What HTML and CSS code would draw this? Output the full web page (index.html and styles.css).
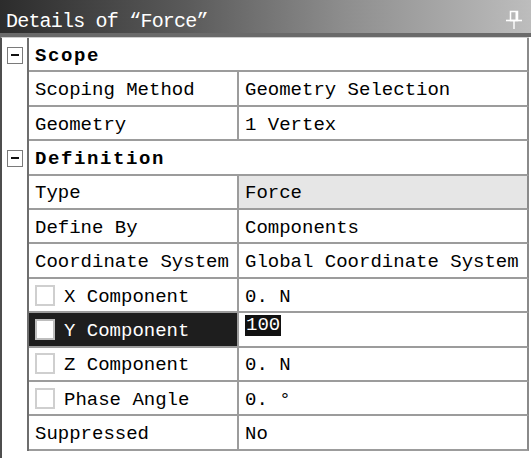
FILE: index.html
```html
<!DOCTYPE html>
<html>
<head>
<meta charset="utf-8">
<link rel="stylesheet" href="styles.css">
</head>
<body>
<div class="panel">
  <div class="titlebar">
    <span class="title">Details of “Force”</span>
    <svg class="pin" width="18" height="20" viewBox="0 0 18 20">
      <path d="M5.5 1.5 H12.5 V10.5 H5.5 Z" fill="none" stroke="#fff" stroke-width="1.5"/>
      <path d="M11.5 1.5 V10.5" stroke="#fff" stroke-width="2"/>
      <path d="M1 10.5 H17" stroke="#fff" stroke-width="1.6"/>
      <path d="M9 11 V19" stroke="#fff" stroke-width="1.4"/>
    </svg>
  </div>
  <div class="sheet">
    <div class="row">
      <div class="gut"><span class="toggle"></span></div>
      <div class="hcell">Scope</div>
    </div>
    <div class="row">
      <div class="gut"></div>
      <div class="name">Scoping Method</div>
      <div class="val">Geometry Selection</div>
    </div>
    <div class="row">
      <div class="gut"></div>
      <div class="name">Geometry</div>
      <div class="val">1 Vertex</div>
    </div>
    <div class="row">
      <div class="gut"><span class="toggle"></span></div>
      <div class="hcell">Definition</div>
    </div>
    <div class="row">
      <div class="gut"></div>
      <div class="name">Type</div>
      <div class="val shaded">Force</div>
    </div>
    <div class="row">
      <div class="gut"></div>
      <div class="name">Define By</div>
      <div class="val">Components</div>
    </div>
    <div class="row">
      <div class="gut"></div>
      <div class="name">Coordinate System</div>
      <div class="val">Global Coordinate System</div>
    </div>
    <div class="row">
      <div class="gut"></div>
      <div class="name"><span class="check"></span>X Component</div>
      <div class="val">0. N</div>
    </div>
    <div class="row">
      <div class="gut"></div>
      <div class="name selected"><span class="check"></span>Y Component</div>
      <div class="val"><span class="edit">100</span></div>
    </div>
    <div class="row">
      <div class="gut"></div>
      <div class="name"><span class="check"></span>Z Component</div>
      <div class="val">0. N</div>
    </div>
    <div class="row">
      <div class="gut"></div>
      <div class="name"><span class="check"></span>Phase Angle</div>
      <div class="val">0. °</div>
    </div>
    <div class="row">
      <div class="gut"></div>
      <div class="name">Suppressed</div>
      <div class="val">No</div>
    </div>
  </div>
</div>
</body>
</html>
```

FILE: styles.css
```css
* { box-sizing: border-box; }
html, body {
  margin: 0;
  padding: 0;
  background: #fff;
}
.panel {
  width: 531px;
  height: 458px;
  display: flex;
  flex-direction: column;
  font-family: "Liberation Mono", monospace;
  color: #000;
  overflow: hidden;
}
.titlebar {
  height: 37px;
  flex: none;
  display: flex;
  align-items: flex-start;
  padding: 10px 8px 0 6px;
  background: linear-gradient(to right, #2c2c2c 0%, #5a5a5a 35%, #8e8e8e 65%, #bdbdbd 100%);
  border-bottom: 4px solid #6a6a6a;
}
.title {
  color: #fff;
  font-size: 20px;
  letter-spacing: -0.8px;
  white-space: pre;
}
.pin {
  margin-left: auto;
  margin-top: 0;
}
.sheet {
  flex: 1;
  width: 529px;
  border-left: 2px solid #4e4e4e;
  border-top: 1px solid #cfcfcf;
}
.row {
  display: grid;
  grid-template-columns: 27px 210px 1fr;
  height: 34.42px;
}
.gut {
  border-right: 2px solid #6e6e6e;
  display: flex;
  align-items: center;
  padding-left: 5px;
}
.toggle {
  width: 16px;
  height: 17px;
  border: 1px solid #7a7a7a;
  background: #fff;
  display: flex;
  align-items: center;
  justify-content: center;
}
.toggle::before {
  content: "";
  width: 8px;
  height: 2px;
  background: #111;
}
.name, .val, .hcell {
  border-bottom: 2px solid #9c9c9c;
  display: flex;
  align-items: center;
  padding-top: 3px;
  font-size: 19px;
  white-space: pre;
}
.name {
  border-right: 2px solid #9c9c9c;
  padding-left: 6px;
}
.val {
  border-right: 2px solid #8a8a8a;
  padding-left: 6px;
}
.hcell {
  grid-column: span 2;
  border-right: 2px solid #8a8a8a;
  padding-left: 6px;
  font-weight: bold;
  letter-spacing: 1.6px;
}
.shaded {
  background: #e6e6e6;
}
.check {
  width: 20px;
  height: 21px;
  border: 2px solid #cfcfcf;
  background: #fff;
  margin-right: 9px;
  margin-top: -3px;
  flex: none;
}
.selected {
  background: #1e1e1e;
  color: #fff;
}
.selected .check {
  border-color: #bdbdbd;
}
.edit {
  background: #111;
  color: #fff;
  padding: 0 1px;
  line-height: 21px;
  margin-top: -11px;
}
```
